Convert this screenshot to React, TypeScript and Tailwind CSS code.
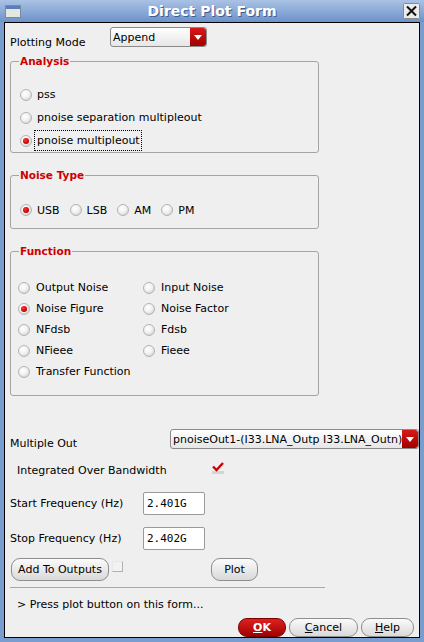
import type { ReactNode } from 'react'

const font = { fontFamily: '"DejaVu Sans", sans-serif' }

const Radio = ({ checked = false }: { checked?: boolean }) => (
  <span className="flex h-[12px] w-[12px] shrink-0 items-center justify-center rounded-full border border-[#b4b4b4] bg-[radial-gradient(circle_at_40%_35%,#ffffff_0%,#f2f2f2_45%,#c4c4c4_100%)]">
    {checked && <span className="h-[6px] w-[6px] rounded-full bg-[radial-gradient(circle_at_40%_35%,#ff3a3a_0%,#d00000_60%,#900000_100%)]" />}
  </span>
)

const RadioItem = ({ label, checked, gap = 'gap-[5px]' }: { label: string; checked?: boolean; gap?: string }) => (
  <div className={`flex items-center ${gap}`}>
    <Radio checked={checked} />
    <span className="whitespace-nowrap">{label}</span>
  </div>
)

const Group = ({ title, height, children }: { title: string; height: string; children: ReactNode }) => (
  <div className={`ml-[5px] w-[309px] rounded-[3px] border border-[#a4a4a4] ${height}`}>
    <div className="-mt-[7px] ml-[8px] w-fit bg-[#efefef] px-[1px] text-[10.5px] leading-[12px] font-bold text-[#cc0000]">
      {title}
    </div>
    {children}
  </div>
)

const Arrow = () => (
  <span className="flex h-full w-[16px] shrink-0 items-center justify-center rounded-r-[3px] bg-linear-to-b from-[#d81818] to-[#a00000]">
    <svg width="8" height="5" viewBox="0 0 8 5">
      <path d="M0 0 L8 0 L4 5 Z" fill="#ffffff" />
    </svg>
  </span>
)

const Button = ({ children, width }: { children: ReactNode; width: string }) => (
  <div
    className={`flex h-[23px] items-center justify-center rounded-[9px] border border-[#8e8e8e] bg-linear-to-b from-[#fbfbfb] to-[#d9d9d9] ${width}`}
  >
    {children}
  </div>
)

const SmallButton = ({ children, width, red = false }: { children: ReactNode; width: string; red?: boolean }) => (
  <div
    className={`flex h-[19px] items-center justify-center rounded-[9px] border ${width} ${
      red
        ? 'border-[#7a0000] bg-linear-to-b from-[#e02020] to-[#a00000] font-bold text-white'
        : 'border-[#8e8e8e] bg-linear-to-b from-[#fbfbfb] to-[#d9d9d9]'
    }`}
  >
    {children}
  </div>
)

export default function App() {
  return (
    <div className="flex h-[642px] w-[424px] flex-col bg-[#7a9dd0] text-[11px] leading-[13px] text-black" style={font}>
      {/* title bar */}
      <div className="grid h-[22px] grid-cols-[1fr_auto_1fr] items-center bg-linear-to-b from-[#aac2e4] to-[#6d92c9]">
        <div className="pl-[5px]">
          <svg width="16" height="13" viewBox="0 0 16 13">
            <rect x="0.5" y="0.5" width="15" height="12" fill="#e4e7e0" stroke="#7a8aa0" />
            <rect x="1" y="1" width="14" height="3" fill="#5a7fb8" />
          </svg>
        </div>
        <div className="text-[14px] leading-[16px] font-bold text-white [text-shadow:1px_1px_0_#3d5f91]">Direct Plot Form</div>
        <div className="flex justify-end pr-[4px]">
          <svg width="17" height="16" viewBox="0 0 17 16">
            <rect x="0.5" y="0.5" width="16" height="15" rx="1" fill="#ececec" stroke="#8a8a8a" />
            <path d="M4 3.5 L13 12.5 M13 3.5 L4 12.5" stroke="#111111" strokeWidth="2" />
          </svg>
        </div>
      </div>

      {/* body */}
      <div className="mx-[4px] mb-[4px] flex flex-1 flex-col border border-black bg-[#efefef]">
        {/* plotting mode */}
        <div className="mt-[4px] flex h-[20px] items-start">
          <span className="mt-[9px] ml-[5px] w-[100px]">Plotting Mode</span>
          <div className="flex h-[20px] w-[97px] items-center rounded-[3px] border border-[#8a8a8a] bg-linear-to-b from-[#ffffff] to-[#e6e6e6]">
            <span className="flex-1 pl-[2px]">Append</span>
            <Arrow />
          </div>
        </div>

        <div className="mt-[14px]">
          <Group title="Analysis" height="h-[92px]">
            <div className="mt-[16px] flex flex-col pl-[9px]">
              <div className="flex h-[23px] items-center">
                <RadioItem label="pss" />
              </div>
              <div className="flex h-[23px] items-center">
                <RadioItem label="pnoise separation multipleout" />
              </div>
              <div className="flex h-[23px] items-center gap-[2px]">
                <Radio checked />
                <span className="flex h-[21px] items-center border border-dotted border-black pr-[1px] pl-[2px]">pnoise multipleout</span>
              </div>
            </div>
          </Group>
        </div>

        <div className="mt-[22px]">
          <Group title="Noise Type" height="h-[54px]">
            <div className="mt-[19px] flex h-[20px] items-center gap-[10px] pl-[9px]">
              <RadioItem label="USB" checked />
              <RadioItem label="LSB" />
              <RadioItem label="AM" />
              <RadioItem label="PM" />
            </div>
          </Group>
        </div>

        <div className="mt-[22px]">
          <Group title="Function" height="h-[145px]">
            <div className="mt-[20px] flex flex-col pl-[7px]">
              {[
                ['Output Noise', 'Input Noise'],
                ['Noise Figure', 'Noise Factor'],
                ['NFdsb', 'Fdsb'],
                ['NFieee', 'Fieee'],
                ['Transfer Function', ''],
              ].map(([a, b]) => (
                <div key={a} className="grid h-[21px] grid-cols-[125px_1fr] items-center">
                  <RadioItem label={a} checked={a === 'Noise Figure'} gap="gap-[6px]" />
                  {b ? <RadioItem label={b} gap="gap-[6px]" /> : <span />}
                </div>
              ))}
            </div>
          </Group>
        </div>

        {/* multiple out */}
        <div className="mt-[33px] flex h-[20px] items-start">
          <span className="mt-[8px] ml-[5px] w-[160px] shrink-0">Multiple Out</span>
          <div className="flex h-[20px] w-[249px] shrink-0 items-center overflow-hidden rounded-[3px] border border-[#8a8a8a] bg-linear-to-b from-[#ffffff] to-[#e6e6e6]">
            <span className="min-w-0 flex-1 overflow-hidden pl-[2px] whitespace-nowrap">pnoiseOut1-(I33.LNA_Outp I33.LNA_Outn)</span>
            <Arrow />
          </div>
        </div>

        <div className="mt-[14px] flex h-[14px] items-center">
          <span className="ml-[12px] w-[195px]">Integrated Over Bandwidth</span>
          <svg width="12" height="12" viewBox="0 0 12 12" className="-mt-[4px]">
            <rect x="0" y="9" width="12" height="3" fill="#d4d4d4" />
            <path d="M1 4.5 L4.5 8 L11 1" stroke="#d00000" strokeWidth="2.4" fill="none" />
          </svg>
        </div>

        {/* frequencies */}
        {[
          ['Start Frequency (Hz)', '2.401G', 'mt-[15px]'],
          ['Stop Frequency (Hz)', '2.402G', 'mt-[12px]'],
        ].map(([label, value, mt]) => (
          <div key={label} className={`flex h-[23px] items-center ${mt}`}>
            <span className="ml-[5px] w-[133px]">{label}</span>
            <div
              className="flex h-[23px] w-[62px] items-center rounded-[2px] border border-[#9a9a9a] bg-white pl-[3px]"
              style={{ fontFamily: '"DejaVu Sans Mono", monospace' }}
            >
              {value}
            </div>
          </div>
        ))}

        {/* add / plot */}
        <div className="mt-[8px] flex h-[23px] items-start">
          <div className="ml-[6px]">
            <Button width="w-[98px]">Add To Outputs</Button>
          </div>
          <div className="mt-[3px] ml-[3px] h-[11px] w-[11px] border border-[#b0b0b0] border-t-[#e8e8e8] border-l-[#e8e8e8] bg-[#f2f2f2]" />
          <div className="ml-[88px]">
            <Button width="w-[47px]">Plot</Button>
          </div>
        </div>

        <div className="mt-[6px] ml-[5px] h-px w-[315px] bg-[#a8a8a8]" />

        <div className="mt-[10px] ml-[12px]">&gt; Press plot button on this form...</div>

        <div className="mt-[7px] flex justify-end gap-[3px] pr-[5px]">
          <SmallButton width="w-[48px]" red>
            <span>
              <span className="underline">O</span>K
            </span>
          </SmallButton>
          <SmallButton width="w-[69px]">
            <span>
              <span className="underline">C</span>ancel
            </span>
          </SmallButton>
          <SmallButton width="w-[53px]">
            <span>
              <span className="underline">H</span>elp
            </span>
          </SmallButton>
        </div>
      </div>
    </div>
  )
}
